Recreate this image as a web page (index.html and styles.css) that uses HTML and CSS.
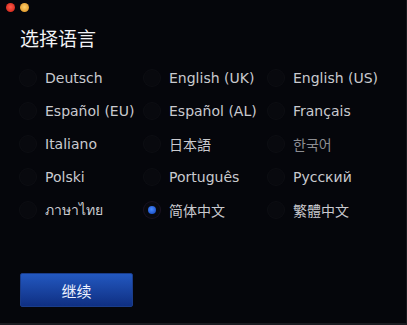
FILE: index.html
```html
<!DOCTYPE html>
<html>
<head>
<meta charset="utf-8">
<link rel="stylesheet" href="styles.css">
</head>
<body>
<div class="window">
  <div class="lights"><span class="light red"></span><span class="light amber"></span></div>
  <h1 class="title">选择语言</h1>
  <div class="grid">
    <label class="opt"><span class="radio"></span><span class="lbl">Deutsch</span></label>
    <label class="opt"><span class="radio"></span><span class="lbl">English (UK)</span></label>
    <label class="opt"><span class="radio"></span><span class="lbl">English (US)</span></label>
    <label class="opt"><span class="radio"></span><span class="lbl">Español (EU)</span></label>
    <label class="opt"><span class="radio"></span><span class="lbl">Español (AL)</span></label>
    <label class="opt"><span class="radio"></span><span class="lbl">Français</span></label>
    <label class="opt"><span class="radio"></span><span class="lbl">Italiano</span></label>
    <label class="opt"><span class="radio"></span><span class="lbl cjk">日本語</span></label>
    <label class="opt"><span class="radio"></span><span class="lbl cjk dim">한국어</span></label>
    <label class="opt"><span class="radio"></span><span class="lbl">Polski</span></label>
    <label class="opt"><span class="radio"></span><span class="lbl">Português</span></label>
    <label class="opt"><span class="radio"></span><span class="lbl">Русский</span></label>
    <label class="opt"><span class="radio"></span><span class="lbl">ภาษาไทย</span></label>
    <label class="opt"><span class="radio on"></span><span class="lbl cjk">简体中文</span></label>
    <label class="opt"><span class="radio"></span><span class="lbl cjk">繁體中文</span></label>
  </div>
  <button class="btn">继续</button>
</div>
</body>
</html>
```
FILE: styles.css
```css
html, body {
  margin: 0;
  padding: 0;
  background: #05060b;
}
.window {
  width: 407px;
  height: 325px;
  box-sizing: border-box;
  background: #05060b;
  border-right: 1px solid #16171c;
  border-bottom: 2px solid #1a1b20;
  position: relative;
  font-family: "DejaVu Sans", "Noto Sans CJK SC", sans-serif;
  color: #c9cacf;
  padding: 0 0 0 20px;
}
.lights {
  position: absolute;
  left: 6px;
  top: 3px;
  display: flex;
  gap: 5px;
}
.light {
  width: 9px;
  height: 9px;
  border-radius: 50%;
  display: block;
}
.red { background: radial-gradient(circle at 50% 45%, #ff5a4a, #c81c10); }
.amber { background: radial-gradient(circle at 50% 45%, #ffcf6a, #d88a1a); }
.title {
  margin: 0;
  padding-top: 26px;
  font-family: "Noto Sans CJK SC", sans-serif;
  font-weight: 400;
  font-size: 19px;
  line-height: 24px;
  color: #f2f3f6;
}
.grid {
  margin-top: 11px;
  display: grid;
  grid-template-columns: 124px 124px 120px;
  grid-auto-rows: 33px;
}
.opt {
  display: flex;
  align-items: center;
  gap: 9px;
}
.radio {
  width: 16px;
  height: 16px;
  border-radius: 50%;
  background: #08090e;
  box-shadow: 0 0 0 1px #0d0e13;
  position: relative;
  flex: none;
}
.radio.on {
  box-shadow: 0 0 0 1px #1a1220;
}
.radio.on::after {
  content: "";
  position: absolute;
  left: 4px;
  top: 4px;
  width: 8px;
  height: 8px;
  border-radius: 50%;
  background: radial-gradient(circle at 45% 40%, #4a8cff, #1040b8);
}
.lbl {
  font-size: 14px;
  line-height: 18px;
  white-space: nowrap;
}
.cjk {
  font-family: "Noto Sans CJK SC", "Noto Sans CJK KR", sans-serif;
}
.dim { color: #8c8d92; }
.btn {
  margin-top: 47px;
  width: 113px;
  height: 34px;
  border: 1px solid #1a3c8a;
  border-radius: 2px;
  background: linear-gradient(#2358c0, #0f2f82);
  color: #eef2ff;
  font-family: "Noto Sans CJK SC", sans-serif;
  font-size: 15px;
  display: block;
}
```
